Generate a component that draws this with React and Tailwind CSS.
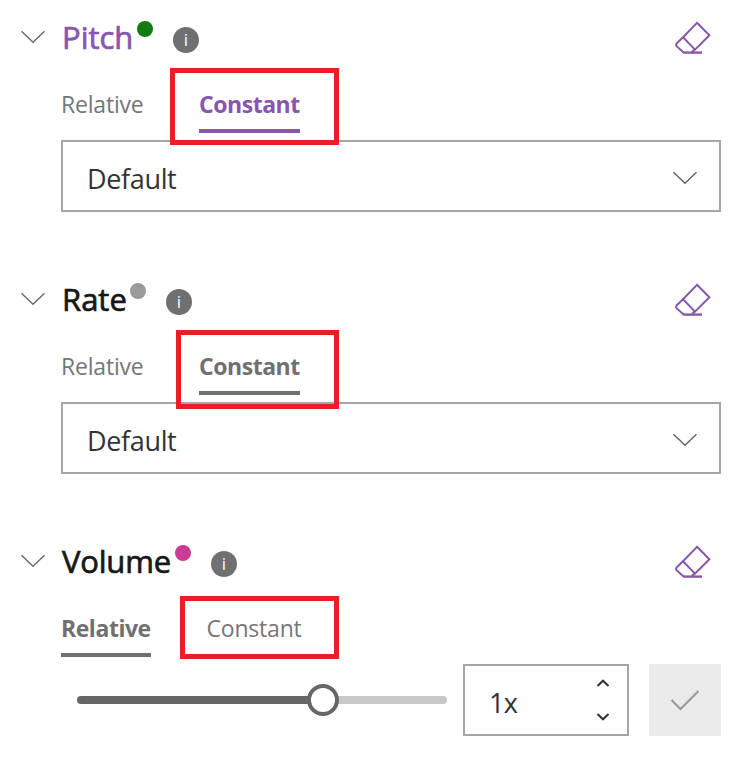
import React from "react";

function Chevron({ className }) {
  return (
    <svg className={className} width="26" height="14" viewBox="0 0 26 14" fill="none" stroke="currentColor" strokeWidth="1.5">
      <path d="M1.5 1.2 13 12.2 24.5 1.2" />
    </svg>
  );
}

function Eraser() {
  return (
    <svg className="block text-[#8856ad]" width="38" height="36" viewBox="0 0 38 36" fill="none" stroke="currentColor" strokeWidth="2">
      <path d="M23 2.8 35.4 15.2 21 29.6 9 17.2Z" />
      <path d="M9 17.2 2.8 23.2Q1.4 24.8 2.8 26.4L9.6 32.6" />
      <path d="M9.2 32.6H28" strokeWidth="2.4" />
      <path d="M21 29 18 32" />
    </svg>
  );
}

function Header({ title, titleClass, dotClass }) {
  return (
    <div className="flex h-20 items-start pl-5">
      <Chevron className="mt-[30px] shrink-0 text-[#6b6b6b]" />
      <h2 className={`ml-[15px] mt-[17px] whitespace-nowrap pl-px text-[31px] font-normal leading-10 [-webkit-text-stroke:0.7px_currentColor] ${titleClass}`}>
        {title}
      </h2>
      <span className={`mt-[21px] size-4 shrink-0 rounded-full ${dotClass}`} />
      <span className="ml-5 mt-[27px] flex size-[26px] shrink-0 items-center justify-center rounded-full bg-[#707070] text-[17px] leading-none text-white">
        <span className="-mt-0.5">i</span>
      </span>
      <button className="ml-auto mr-[37px] mt-5" aria-label="Reset">
        <Eraser />
      </button>
    </div>
  );
}

function Tab({ label, active, className }) {
  return (
    <div
      className={`h-[53px] whitespace-nowrap border-b-4 pt-[7px] text-[23px] leading-[34px] ${
        active ? "border-current font-bold tracking-[-0.45px]" : "border-transparent font-normal tracking-[-0.2px] text-[#767676]"
      } ${className}`}
    >
      {label}
    </div>
  );
}

function Highlight({ className }) {
  return <div className={`pointer-events-none absolute border-[5px] border-[#ee1c24] ${className}`} />;
}

function DefaultSelect() {
  return (
    <div className="ml-[61px] mt-[7px] flex h-[72px] w-[660px] items-center justify-between border-2 border-[#a6a6a6] pl-6 pr-[21px]">
      <span className="mt-1.5 text-[27px] tracking-[-0.35px] text-[#333]">Default</span>
      <Chevron className="mt-1 text-[#666]" />
    </div>
  );
}

export default function App() {
  return (
    <main className="h-[765px] w-[749px] overflow-hidden bg-white font-['Open_Sans','Noto_Sans',sans-serif]">
      <section className="relative h-[262px]">
        <Header title="Pitch" titleClass="w-[76px] text-[#8856ad]" dotClass="bg-[#107c10]" />
        <div className="flex pl-[61px]">
          <Tab label="Relative" className="w-[90px]" />
          <Tab label="Constant" active className="ml-12 w-[101px] text-[#8856ad]" />
        </div>
        <DefaultSelect />
        <Highlight className="left-[170px] top-[68px] h-[77px] w-[169px]" />
      </section>

      <section className="relative h-[262px]">
        <Header title="Rate" titleClass="w-[69px] text-[#171717]" dotClass="bg-[#9b9b9b]" />
        <div className="flex pl-[61px]">
          <Tab label="Relative" className="w-[90px]" />
          <Tab label="Constant" active className="ml-12 w-[101px] text-[#707070]" />
        </div>
        <DefaultSelect />
        <Highlight className="left-[176px] top-[68px] h-[79px] w-[163px]" />
      </section>

      <section className="relative h-[241px]">
        <Header title="Volume" titleClass="w-[114px] text-[#171717] tracking-[-0.2px]" dotClass="bg-[#c83c96]" />
        <div className="flex pl-[61px]">
          <Tab label="Relative" active className="w-[90px] text-[#707070]" />
          <Tab label="Constant" className="ml-[55.5px] w-[101px]" />
        </div>
        <div className="mt-[7px] flex h-[72px] items-center pl-[77px]">
          <div className="flex w-[370px] items-center">
            <div className="h-2 w-[232px] rounded-l-full bg-[#666]" />
            <div className="relative -mx-0.5 size-8 rounded-full border-4 border-[#666] bg-white" />
            <div className="h-2 flex-1 rounded-r-full bg-[#c8c8c8]" />
          </div>
          <div className="ml-4 flex h-[72px] w-[166px] items-center justify-between border-2 border-[#a6a6a6] pl-6 pr-[17px]">
            <span className="mt-1.5 text-[27px] tracking-[-0.8px] text-[#333]">1x</span>
            <span className="-mt-px flex flex-col gap-[26px] text-[#333]">
              <svg width="14" height="8" viewBox="0 0 14 8" fill="none" stroke="currentColor" strokeWidth="2">
                <path d="M1.5 7 7 1.7 12.5 7" />
              </svg>
              <svg width="14" height="8" viewBox="0 0 14 8" fill="none" stroke="currentColor" strokeWidth="2">
                <path d="M1.5 1 7 6.3 12.5 1" />
              </svg>
            </span>
          </div>
          <button className="ml-5 flex size-[72px] items-center justify-center bg-[#ebebeb] text-[#999]" aria-label="Apply">
            <svg width="30" height="22" viewBox="0 0 30 22" fill="none" stroke="currentColor" strokeWidth="2">
              <path d="M1.5 11 10.5 20 28.5 2" />
            </svg>
          </button>
        </div>
        <Highlight className="left-[180px] top-[72px] h-[63px] w-[159px]" />
      </section>
    </main>
  );
}
